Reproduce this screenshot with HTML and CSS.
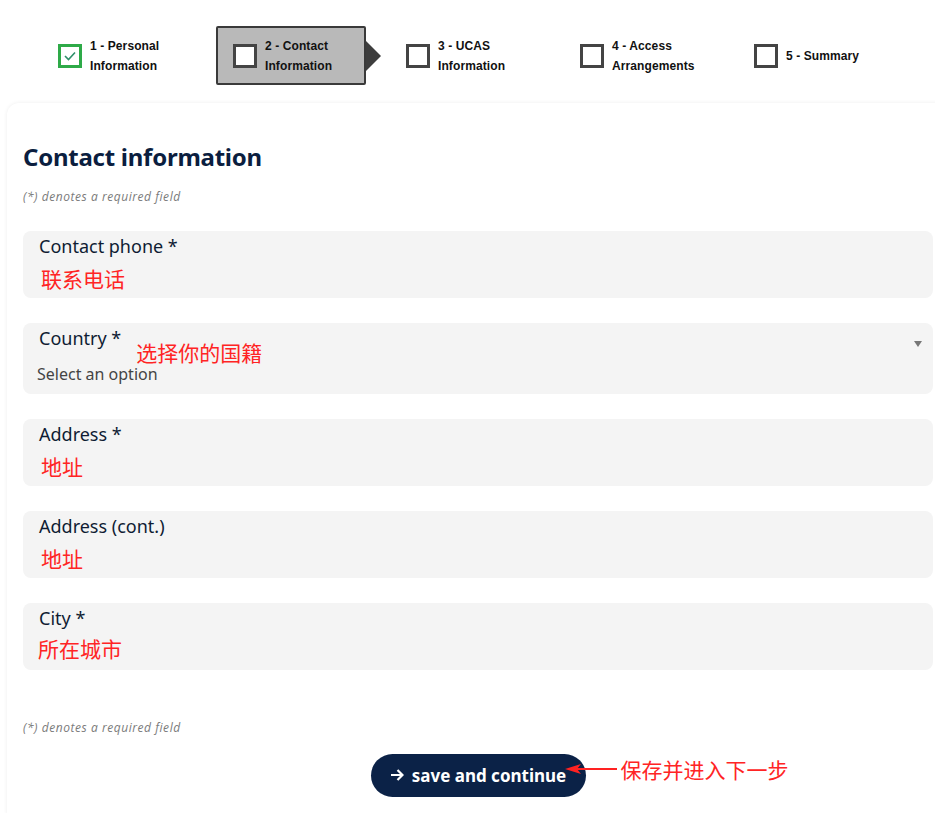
FILE: index.html
```html
<!DOCTYPE html>
<html lang="en">
<head>
<meta charset="utf-8">
<title>Contact information</title>
<link rel="stylesheet" href="styles.css">
</head>
<body>
<nav class="stepper">
  <div class="step done">
    <span class="box"><svg viewBox="0 0 12 10" width="12" height="10"><path d="M1 5 L4.5 8.5 L11 1.5" fill="none" stroke="#2f8f6a" stroke-width="1.6"/></svg></span>
    <span class="step-label">1 - Personal<br>Information</span>
  </div>
  <div class="step current">
    <span class="box"></span>
    <span class="step-label">2 - Contact<br>Information</span>
    <span class="pointer"></span>
  </div>
  <div class="step">
    <span class="box"></span>
    <span class="step-label">3 - UCAS<br>Information</span>
  </div>
  <div class="step">
    <span class="box"></span>
    <span class="step-label">4 - Access<br>Arrangements</span>
  </div>
  <div class="step">
    <span class="box"></span>
    <span class="step-label">5 - Summary</span>
  </div>
</nav>

<main class="card">
  <h1 class="title">Contact information</h1>
  <p class="note">(*) denotes a required field</p>

  <div class="fields">
    <div class="field">
      <div class="label">Contact phone *</div>
      <div class="annot">联系电话</div>
    </div>
    <div class="field select">
      <div class="select-top">
        <div class="label">Country *</div>
        <div class="annot annot-inline">选择你的国籍</div>
        <span class="caret"></span>
      </div>
      <div class="placeholder">Select an option</div>
    </div>
    <div class="field">
      <div class="label">Address *</div>
      <div class="annot">地址</div>
    </div>
    <div class="field">
      <div class="label">Address (cont.)</div>
      <div class="annot">地址</div>
    </div>
    <div class="field">
      <div class="label">City *</div>
      <div class="annot annot-city">所在城市</div>
    </div>
  </div>

  <p class="note note-bottom">(*) denotes a required field</p>

  <div class="actions">
    <button class="save" type="button">
      <svg class="arrow" viewBox="0 0 14 14" width="14" height="14"><path d="M1 7 H12.5 M7.5 2 L12.5 7 L7.5 12" fill="none" stroke="#fff" stroke-width="2.2"/></svg>
      <span>save and continue</span>
      <span class="callout">
        <svg class="callout-arrow" viewBox="0 0 52 12" width="52" height="12"><path d="M52 6 L12 6" stroke="#f22" stroke-width="2.2"/><path d="M0 6 L16 1 L12 6 L16 11 Z" fill="#f22"/></svg>
        <span class="callout-text">保存并进入下一步</span>
      </span>
    </button>
  </div>
</main>
</body>
</html>
```

FILE: styles.css
```css
html, body {
  margin: 0;
  padding: 0;
  background: #ffffff;
  overflow: hidden;
}

body {
  width: 935px;
  height: 813px;
  font-family: "Noto Sans", "Noto Sans CJK SC", sans-serif;
}

/* ---------- stepper ---------- */
.stepper {
  display: flex;
  gap: 24px;
  padding: 26px 0 0 42px;
  height: 59px;
  font-family: "Liberation Sans", Arial, sans-serif;
}

.step {
  position: relative;
  box-sizing: border-box;
  width: 150px;
  height: 59px;
  display: flex;
  align-items: center;
  padding-left: 14px;
  border: 2px solid transparent;
}

.step.current {
  background: #b9b9b9;
  border-color: #3a3a3a;
  border-radius: 2px;
  padding-left: 15px;
}

.box {
  box-sizing: border-box;
  width: 24px;
  height: 24px;
  flex: none;
  background: #fff;
  border: 3px solid #444;
  display: flex;
  align-items: center;
  justify-content: center;
}

.step.done .box {
  border-color: #2eaa48;
}

.step-label {
  margin-left: 8px;
  font-size: 12px;
  font-weight: bold;
  line-height: 20px;
  color: #111;
  white-space: nowrap;
  letter-spacing: 0.1px;
}

.pointer {
  position: absolute;
  right: -17px;
  top: 13px;
  width: 0;
  height: 0;
  border-top: 15px solid transparent;
  border-bottom: 15px solid transparent;
  border-left: 15px solid #3d3d3d;
}

/* ---------- card ---------- */
.card {
  box-sizing: border-box;
  margin: 18px 0 0 7px;
  width: 950px;
  height: 720px;
  padding: 38px 24px 0 16px;
  background: #fff;
  border-radius: 12px;
  box-shadow: 0 0 4px rgba(0, 0, 0, 0.07);
}

.title {
  margin: 0;
  font-size: 24px;
  line-height: 32px;
  font-weight: 700;
  color: #0b1e3f;
  letter-spacing: -0.25px;
}

.note {
  margin: 16px 0 0;
  font-family: "Open Sans", "Noto Sans", sans-serif;
  font-size: 12px;
  line-height: 16px;
  font-style: italic;
  color: #7a7a7a;
  letter-spacing: 0.55px;
}

.fields {
  display: flex;
  flex-direction: column;
  gap: 25px;
  margin-top: 26px;
  width: 910px;
}

.field {
  box-sizing: border-box;
  height: 67px;
  background: #f4f4f4;
  border-radius: 8px;
  padding: 3px 16px 0 16px;
}

.field.select {
  height: 71px;
  padding-left: 14px;
}

.label {
  font-size: 18px;
  line-height: 24px;
  color: #0f1c33;
}

.field.select .label {
  padding-left: 2px;
}

.annot {
  margin-top: 7px;
  margin-left: 2px;
  font-family: "Noto Sans CJK SC", sans-serif;
  font-size: 21px;
  line-height: 26px;
  color: #ff2424;
}

.annot-city {
  margin-left: -1px;
  margin-top: 5px;
}

.select-top {
  display: flex;
  align-items: flex-start;
}

.annot-inline {
  margin: 13px 0 0 15px;
}

.caret {
  margin: 15px 0 0 auto;
  margin-right: -5px;
  width: 0;
  height: 0;
  border-left: 4px solid transparent;
  border-right: 4px solid transparent;
  border-top: 6px solid #777;
}

.placeholder {
  margin-top: -2px;
  font-size: 16px;
  line-height: 22px;
  color: #444;
}

.note-bottom {
  margin-top: 50px;
}

.actions {
  display: flex;
  justify-content: center;
  width: 910px;
  margin-top: 18px;
}

.save {
  position: relative;
  box-sizing: border-box;
  width: 215px;
  height: 43px;
  border: none;
  border-radius: 22px;
  background: #0b2247;
  color: #fff;
  font-family: "Noto Sans", sans-serif;
  font-size: 17px;
  font-weight: 700;
  padding: 0 0 1px 0;
  display: flex;
  align-items: center;
  justify-content: center;
  gap: 8px;
}

.arrow {
  flex: none;
}

.callout {
  position: absolute;
  left: 194px;
  top: 2px;
  display: flex;
  align-items: center;
  gap: 4px;
}

.callout-text {
  font-family: "Noto Sans CJK SC", sans-serif;
  font-weight: 400;
  font-size: 21px;
  line-height: 26px;
  color: #ff2424;
  white-space: nowrap;
}
```
